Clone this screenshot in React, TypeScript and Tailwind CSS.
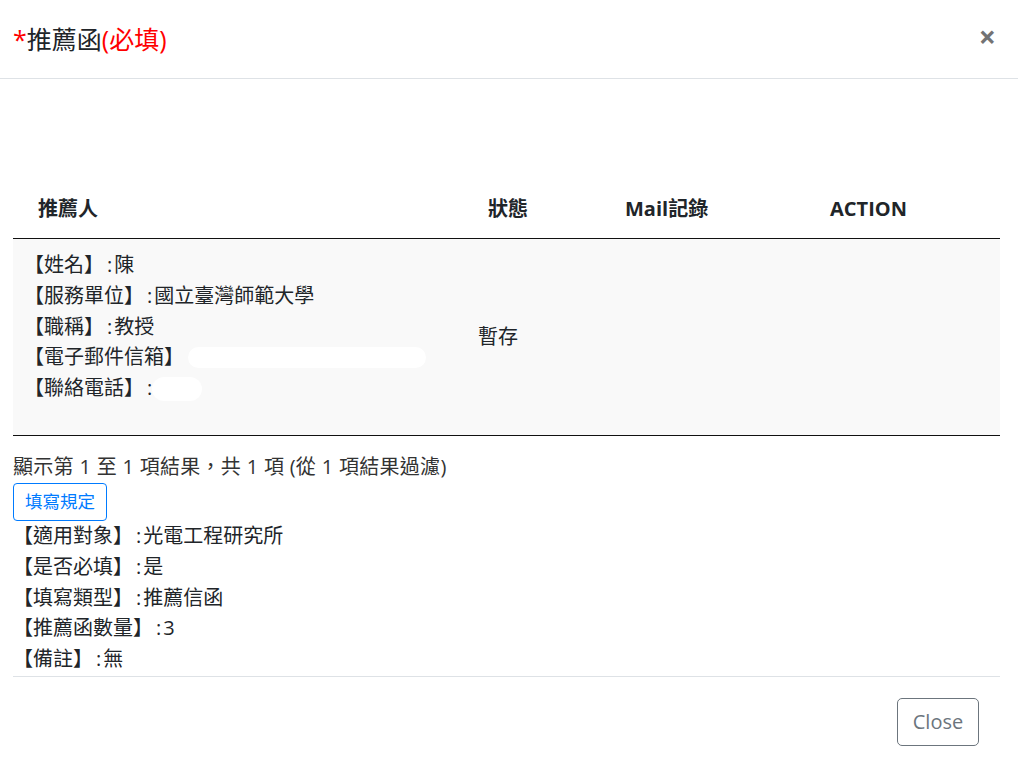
import React from "react";

const FONT = "font-['Open_Sans','Noto_Sans_CJK_TC',sans-serif]";

interface IField {
    label: string;
    value: string;
}

const rules: IField[] = [
    { label: "【適用對象】", value: "光電工程研究所" },
    { label: "【是否必填】", value: "是" },
    { label: "【填寫類型】", value: "推薦信函" },
    { label: "【推薦函數量】", value: "3" },
    { label: "【備註】", value: "無" },
];

// the colon in the original font is wider than Open Sans' one
function Colon(): JSX.Element {
    return <span className="ml-[3px] mr-[2px]">:</span>;
}

function Redacted({ className }: { className: string }): JSX.Element {
    return <span className={"inline-block align-middle rounded-full bg-white " + className}></span>;
}

export default function App(): JSX.Element {
    return (
        <div className={"w-[1018px] h-[773px] bg-white text-[#212529] " + FONT}>
            {/* header */}
            <div className="flex items-center justify-between h-[79px] border-b border-[#dee2e6] pl-[13px] pr-[22px]">
                <h5 className="text-[25px] leading-[37px] font-normal">
                    <span className="text-[#ff0000]">*</span>推薦函<span className="text-[#ff0000]">(必填)</span>
                </h5>
                <button className="text-[30px] leading-none font-bold text-[#737373] -mt-[4px]">×</button>
            </div>

            {/* body */}
            <div className="pl-[13px] pr-[18px] pt-[101px]">
                <div className="grid grid-cols-[452px_135px_205px_195px] h-[59px] items-center border-b border-[#111] text-[20px] font-bold">
                    <div className="pl-[25px]">推薦人</div>
                    <div className="pl-[23px]">狀態</div>
                    <div className="pl-[25px]">Mail記錄</div>
                    <div className="pl-[25px]">ACTION</div>
                </div>
                <div className="grid grid-cols-[452px_135px_205px_195px] h-[197px] border-b border-[#111] bg-[#f9f9f9] text-[20px]">
                    <div className="pl-[11px] pt-[11px] leading-[30.75px]">
                        <div>
                            【姓名】<Colon />陳
                        </div>
                        <div>
                            【服務單位】<Colon />國立臺灣師範大學
                        </div>
                        <div>
                            【職稱】<Colon />教授
                        </div>
                        <div className="flex items-center">
                            【電子郵件信箱】
                            <Redacted className="w-[238px] h-[21px] ml-[4px]" />
                        </div>
                        <div className="flex items-center">
                            【聯絡電話】<Colon />
                            <Redacted className="w-[50px] h-[24px] -ml-[2px] mt-[2px]" />
                        </div>
                    </div>
                    <div className="flex items-center pl-[13px]">暫存</div>
                    <div></div>
                    <div></div>
                </div>

                <div className="mt-[16px] text-[20px] leading-[30px] tracking-[0.3px] text-[#333]">
                    顯示第 1 至 1 項結果，共 1 項 (從 1 項結果過濾)
                </div>
                <button className="mt-[1px] h-[38px] px-[11px] rounded-[4px] border border-[#007bff] text-[#007bff] text-[17.5px] leading-none">
                    填寫規定
                </button>
                <div className="text-[20px] leading-[30.75px]">
                    {rules.map((r, key) => (
                        <div key={key}>
                            {r.label}
                            <Colon />
                            {r.value}
                        </div>
                    ))}
                </div>
                <div className="mt-[1px] border-t border-[#dee2e6]"></div>
                <div className="flex justify-end pt-[21px] pr-[21px]">
                    <button className="h-[48px] w-[82px] rounded-[5px] border border-[#6c757d] text-[#6c757d] text-[20px]">
                        Close
                    </button>
                </div>
            </div>
        </div>
    );
}
